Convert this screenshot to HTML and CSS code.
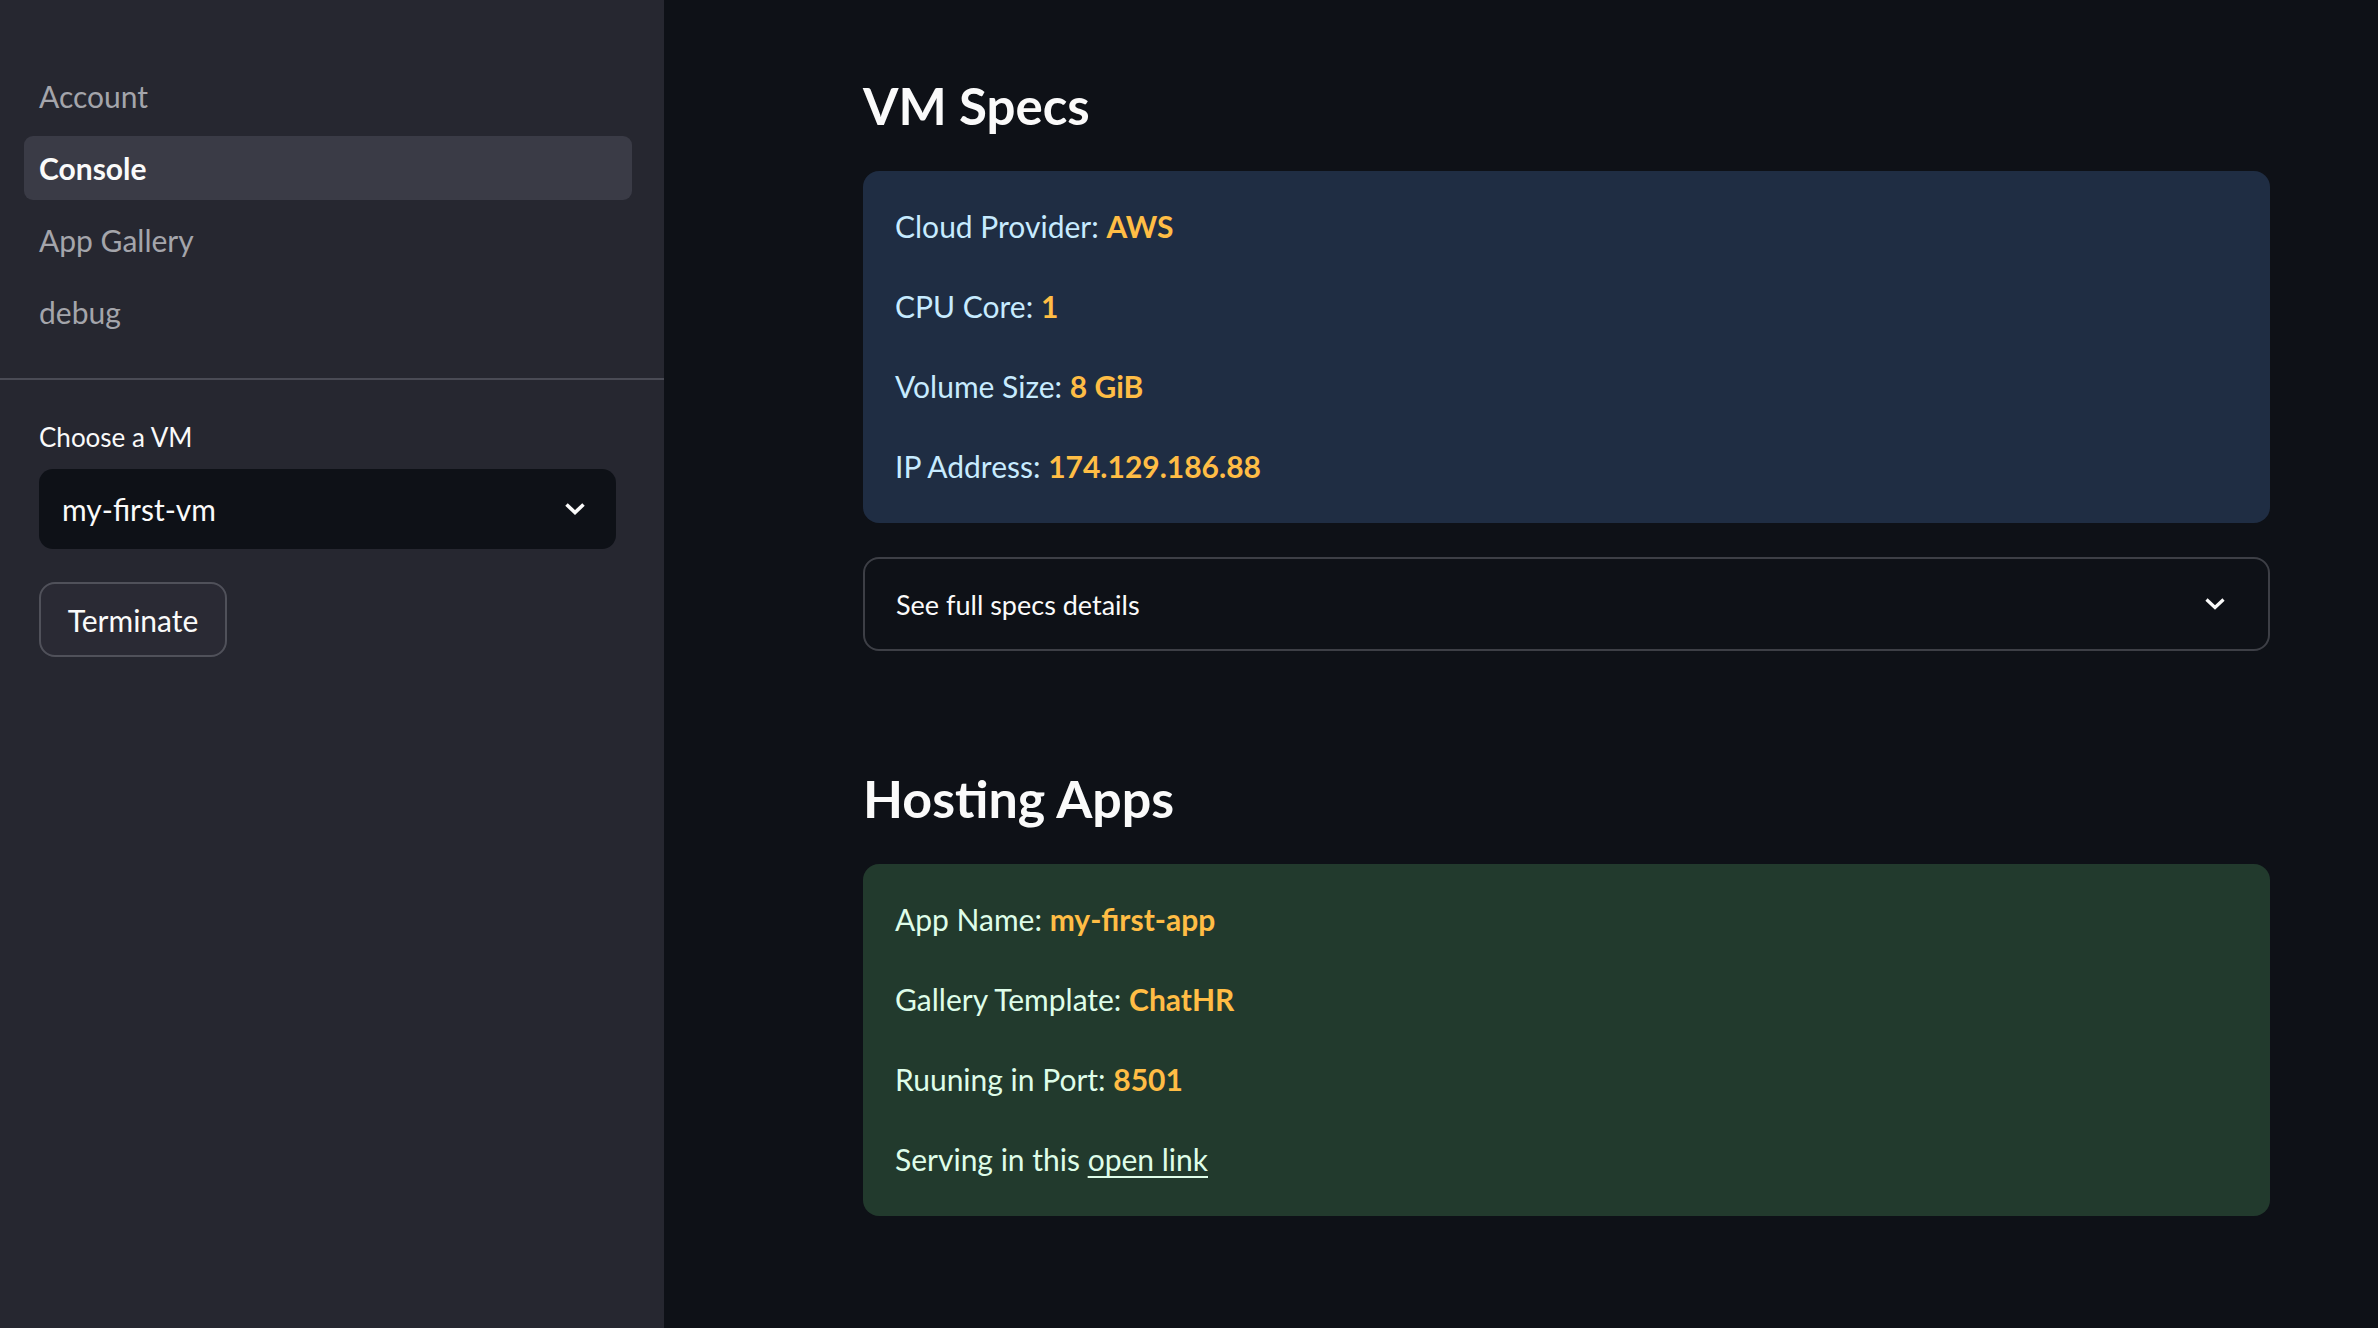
FILE: index.html
```html
<!DOCTYPE html>
<html lang="en">
<head>
<meta charset="utf-8">
<title>Console</title>
<link rel="stylesheet" href="styles.css">
</head>
<body>
<div class="app">
  <aside class="sidebar">
    <nav class="nav">
      <a class="nav-item">Account</a>
      <a class="nav-item active">Console</a>
      <a class="nav-item">App Gallery</a>
      <a class="nav-item">debug</a>
    </nav>
    <div class="divider"></div>
    <div class="side-section">
      <label class="field-label">Choose a VM</label>
      <div class="select">
        <span class="select-value">my-first-vm</span>
        <svg class="chev" width="22" height="14" viewBox="0 0 22 14"><path d="M2.5 2.5 L11 10.5 L19.5 2.5" fill="none" stroke="#fafafa" stroke-width="3.6"/></svg>
      </div>
      <button class="btn">Terminate</button>
    </div>
  </aside>
  <main class="main">
    <div class="block">
      <h3 class="title">VM Specs</h3>
      <div class="card info">
        <p class="line">Cloud Provider: <b class="hl">AWS</b></p>
        <p class="line">CPU Core: <b class="hl">1</b></p>
        <p class="line">Volume Size: <b class="hl">8 GiB</b></p>
        <p class="line">IP Address: <b class="hl">174.129.186.88</b></p>
      </div>
      <div class="expander">
        <span class="exp-label">See full specs details</span>
        <svg class="chev" width="22" height="14" viewBox="0 0 22 14"><path d="M2.5 2.5 L11 10.5 L19.5 2.5" fill="none" stroke="#fafafa" stroke-width="3.2"/></svg>
      </div>
      <h3 class="title second">Hosting Apps</h3>
      <div class="card success">
        <p class="line">App Name: <b class="hl">my-first-app</b></p>
        <p class="line">Gallery Template: <b class="hl">ChatHR</b></p>
        <p class="line">Ruuning in Port: <b class="hl">8501</b></p>
        <p class="line">Serving in this <a class="link">open link</a></p>
      </div>
    </div>
  </main>
</div>
</body>
</html>
```
FILE: styles.css
```css
* { box-sizing: border-box; }
html, body { margin: 0; padding: 0; }
body {
  font-family: Lato, "Open Sans", "Liberation Sans", sans-serif;
  background: #0e1117;
  color: #fafafa;
  width: 2378px;
  height: 1328px;
  overflow: hidden;
}
.app { display: flex; height: 1328px; }

.sidebar {
  width: 664px;
  flex: 0 0 664px;
  background: #262730;
  display: flex;
  flex-direction: column;
}
.nav {
  display: flex;
  flex-direction: column;
  gap: 8px;
  padding: 64px 32px 34px 24px;
}
.nav-item {
  display: flex;
  align-items: center;
  height: 64px;
  padding-left: 15px;
  border-radius: 9px;
  font-size: 30px;
  color: #a4a5ab;
}
.nav-item.active {
  background: #3a3b46;
  color: #fafafa;
  font-weight: 700;
}
.divider { height: 2px; background: #4a4b55; }
.side-section {
  display: flex;
  flex-direction: column;
  align-items: flex-start;
  padding: 39px 48px 0 39px;
}
.field-label {
  font-size: 26px;
  line-height: 36px;
  color: #fafafa;
}
.select {
  margin-top: 14px;
  width: 100%;
  height: 80px;
  background: #0e1117;
  border-radius: 14px;
  display: flex;
  align-items: center;
  justify-content: space-between;
  padding: 0 30px 0 23px;
}
.select-value { font-size: 30px; color: #fafafa; }
.chev { display: block; }
.btn {
  margin-top: 33px;
  width: 188px;
  height: 75px;
  background: #2a2a34;
  border: 2px solid #50515a;
  border-radius: 16px;
  color: #fafafa;
  font-family: inherit;
  font-size: 30px;
  padding: 0;
}

.main { flex: 1; }
.block {
  width: 1407px;
  margin-left: 199px;
  padding-top: 75px;
  display: flex;
  flex-direction: column;
}
.title {
  margin: 0 0 34px;
  font-size: 51px;
  line-height: 62px;
  font-weight: 700;
  color: #fafafa;
}
.title.second { margin-top: 116px; margin-bottom: 35px; font-size: 52px; }
.card {
  border-radius: 16px;
  padding: 31px 32px 33px;
}
.card.info { background: #1f2d43; color: #c7ebff; }
.card.success { background: #223a2d; color: #dffde9; }
.line {
  margin: 0 0 32px;
  font-size: 30px;
  line-height: 48px;
}
.line:last-child { margin-bottom: 0; }
.hl { color: #ffbd45; font-weight: 700; }
.link { color: inherit; text-decoration: underline; text-underline-offset: 5px; text-decoration-thickness: 2px; }
.expander {
  margin-top: 34px;
  height: 94px;
  border: 2px solid #3d3f46;
  border-radius: 16px;
  display: flex;
  align-items: center;
  justify-content: space-between;
  padding: 0 42px 0 31px;
}
.exp-label { font-size: 27px; color: #fafafa; }
```
